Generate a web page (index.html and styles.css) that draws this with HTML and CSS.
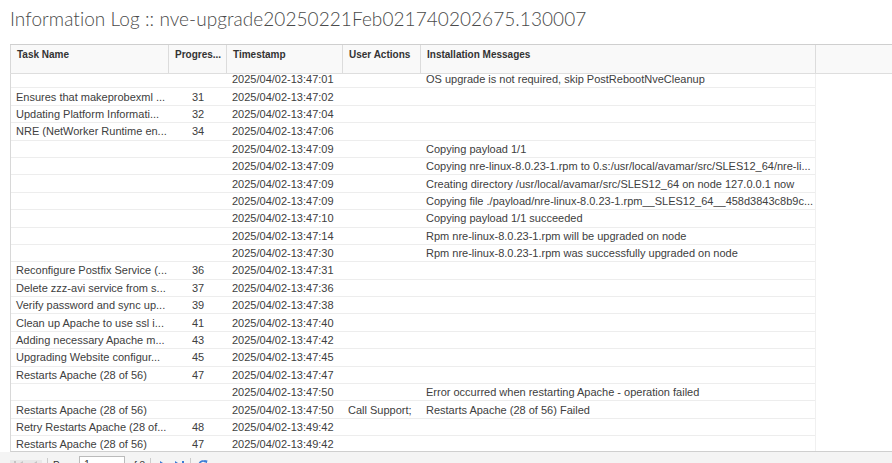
FILE: index.html
```html
<!DOCTYPE html>
<html lang="en">
<head>
    <meta charset="UTF-8">
    <title>Information Log</title>
    <link rel="stylesheet" href="styles.css">
</head>
<body>
    <h1 class="log-title">Information Log :: nve-upgrade20250221Feb021740202675.130007</h1>

    <div class="log-grid">
        <div class="grid-head">
            <div class="hcell">Task Name</div>
            <div class="hcell">Progres...</div>
            <div class="hcell">Timestamp</div>
            <div class="hcell">User Actions</div>
            <div class="hcell">Installation Messages</div>
            <div class="hcell filler"></div>
        </div>

        <div class="grid-body">
            <div class="rows">
                <div class="row"><span></span><span class="num"></span><span>2025/04/02-13:47:01</span><span></span><span>OS upgrade is not required, skip PostRebootNveCleanup</span></div>
                <div class="row"><span>Ensures that makeprobexml ...</span><span class="num">31</span><span>2025/04/02-13:47:02</span><span></span><span></span></div>
                <div class="row"><span>Updating Platform Informati...</span><span class="num">32</span><span>2025/04/02-13:47:04</span><span></span><span></span></div>
                <div class="row"><span>NRE (NetWorker Runtime en...</span><span class="num">34</span><span>2025/04/02-13:47:06</span><span></span><span></span></div>
                <div class="row"><span></span><span class="num"></span><span>2025/04/02-13:47:09</span><span></span><span>Copying payload 1/1</span></div>
                <div class="row"><span></span><span class="num"></span><span>2025/04/02-13:47:09</span><span></span><span>Copying nre-linux-8.0.23-1.rpm to 0.s:/usr/local/avamar/src/SLES12_64/nre-li...</span></div>
                <div class="row"><span></span><span class="num"></span><span>2025/04/02-13:47:09</span><span></span><span>Creating directory /usr/local/avamar/src/SLES12_64 on node 127.0.0.1 now</span></div>
                <div class="row"><span></span><span class="num"></span><span>2025/04/02-13:47:09</span><span></span><span>Copying file ./payload/nre-linux-8.0.23-1.rpm__SLES12_64__458d3843c8b9c...</span></div>
                <div class="row"><span></span><span class="num"></span><span>2025/04/02-13:47:10</span><span></span><span>Copying payload 1/1 succeeded</span></div>
                <div class="row"><span></span><span class="num"></span><span>2025/04/02-13:47:14</span><span></span><span>Rpm nre-linux-8.0.23-1.rpm will be upgraded on node</span></div>
                <div class="row"><span></span><span class="num"></span><span>2025/04/02-13:47:30</span><span></span><span>Rpm nre-linux-8.0.23-1.rpm was successfully upgraded on node</span></div>
                <div class="row"><span>Reconfigure Postfix Service (...</span><span class="num">36</span><span>2025/04/02-13:47:31</span><span></span><span></span></div>
                <div class="row"><span>Delete zzz-avi service from s...</span><span class="num">37</span><span>2025/04/02-13:47:36</span><span></span><span></span></div>
                <div class="row"><span>Verify password and sync up...</span><span class="num">39</span><span>2025/04/02-13:47:38</span><span></span><span></span></div>
                <div class="row"><span>Clean up Apache to use ssl i...</span><span class="num">41</span><span>2025/04/02-13:47:40</span><span></span><span></span></div>
                <div class="row"><span>Adding necessary Apache m...</span><span class="num">43</span><span>2025/04/02-13:47:42</span><span></span><span></span></div>
                <div class="row"><span>Upgrading Website configur...</span><span class="num">45</span><span>2025/04/02-13:47:45</span><span></span><span></span></div>
                <div class="row"><span>Restarts Apache (28 of 56)</span><span class="num">47</span><span>2025/04/02-13:47:47</span><span></span><span></span></div>
                <div class="row"><span></span><span class="num"></span><span>2025/04/02-13:47:50</span><span></span><span>Error occurred when restarting Apache - operation failed</span></div>
                <div class="row"><span>Restarts Apache (28 of 56)</span><span class="num"></span><span>2025/04/02-13:47:50</span><span>Call Support;</span><span>Restarts Apache (28 of 56) Failed</span></div>
                <div class="row"><span>Retry Restarts Apache (28 of...</span><span class="num">48</span><span>2025/04/02-13:49:42</span><span></span><span></span></div>
                <div class="row"><span>Restarts Apache (28 of 56)</span><span class="num">47</span><span>2025/04/02-13:49:42</span><span></span><span></span></div>
            </div>
        </div>
    </div>

    <div class="pager">
        <span class="pg-group disabled">
            <span class="pg-btn">
                <svg width="12" height="10" viewBox="0 0 12 10"><rect x="1" y="1" width="2" height="8" fill="currentColor"/><path d="M10 1 L4 5 L10 9 Z" fill="currentColor"/></svg>
            </span>
            <span class="pg-btn">
                <svg width="10" height="10" viewBox="0 0 10 10"><path d="M8 1 L2 5 L8 9 Z" fill="currentColor"/></svg>
            </span>
        </span>
        <span class="pg-sep"></span>
        <span class="pg-label">Page</span>
        <span class="pg-input">1</span>
        <span class="pg-label">of 3</span>
        <span class="pg-sep"></span>
        <span class="pg-btn">
            <svg width="10" height="10" viewBox="0 0 10 10"><path d="M2 1 L8 5 L2 9 Z" fill="currentColor"/></svg>
        </span>
        <span class="pg-btn">
            <svg width="12" height="10" viewBox="0 0 12 10"><path d="M2 1 L8 5 L2 9 Z" fill="currentColor"/><rect x="9" y="1" width="2" height="8" fill="currentColor"/></svg>
        </span>
        <span class="pg-sep"></span>
        <span class="pg-btn">
            <svg width="12" height="12" viewBox="0 0 12 12"><path d="M10 6 A4 4 0 1 1 8.5 2.9" fill="none" stroke="currentColor" stroke-width="1.6"/><path d="M7 1 L10.5 1.5 L9.5 5 Z" fill="currentColor"/></svg>
        </span>
    </div>
</body>
</html>
```

FILE: styles.css
```css
* {
    box-sizing: border-box;
}

body {
    margin: 0;
    font-family: 'Liberation Sans', Arial, sans-serif;
    color: #333;
    background: #fff;
    overflow: hidden;
    height: 463px;
}

.log-title {
    margin: 0;
    padding: 7px 0 0 10px;
    height: 44px;
    font-family: 'Lato', 'Liberation Sans', sans-serif;
    font-size: 19px;
    font-weight: 300;
    color: #4a4a4a;
    letter-spacing: 0.06px;
}

.log-grid {
    margin-left: 10px;
    height: 408px;
    display: flex;
    flex-direction: column;
    border-top: 1px solid #cfcfcf;
}

.grid-head {
    display: grid;
    grid-template-columns: 158px 58px 116px 78px 395px 1fr;
    height: 29px;
    background: #f9f9f9;
    border-bottom: 1px solid #dedede;
    flex-shrink: 0;
}

.hcell {
    padding: 4px 6px 0;
    font-size: 10px;
    font-weight: bold;
    color: #333;
    border-left: 1px solid #dcdcdc;
    white-space: nowrap;
    overflow: hidden;
}

.hcell:first-child {
    border-left: 1px solid #d8d8d8;
}

.grid-body {
    flex: 1;
    overflow: hidden;
    border-left: 1px solid #d8d8d8;
    border-bottom: 1px solid #cfcfcf;
}

.rows {
    margin-top: -3px;
    width: 805px;
    border-right: 1px solid #f0f0f0;
}

.row {
    display: grid;
    grid-template-columns: 158px 58px 116px 78px 395px;
    height: 17.4px;
    align-items: center;
    border-bottom: 1px solid #ededed;
    font-size: 11px;
    color: #404040;
}

.row span {
    padding: 0 0 0 5px;
    white-space: nowrap;
    overflow: hidden;
}

.row .num {
    padding: 0;
    text-align: center;
}

.pager {
    display: flex;
    align-items: center;
    gap: 3px;
    height: 24px;
    padding: 2px 10px 0;
    background: #f4f4f4;
    font-size: 10px;
    color: #333;
}

.pg-group {
    display: inline-flex;
    gap: 2px;
    padding: 0 2px;
    background: #e8e8e8;
}

.pg-btn {
    display: inline-flex;
    width: 13px;
    justify-content: center;
    color: #3a7bd5;
}

.pg-group.disabled .pg-btn {
    color: #c4c4c4;
}

.pg-sep {
    width: 1px;
    height: 14px;
    background: #ccc;
    margin: 0 2px;
}

.pg-input {
    width: 46px;
    height: 18px;
    border: 1px solid #bbb;
    background: #fff;
    padding: 2px 4px;
}
```
